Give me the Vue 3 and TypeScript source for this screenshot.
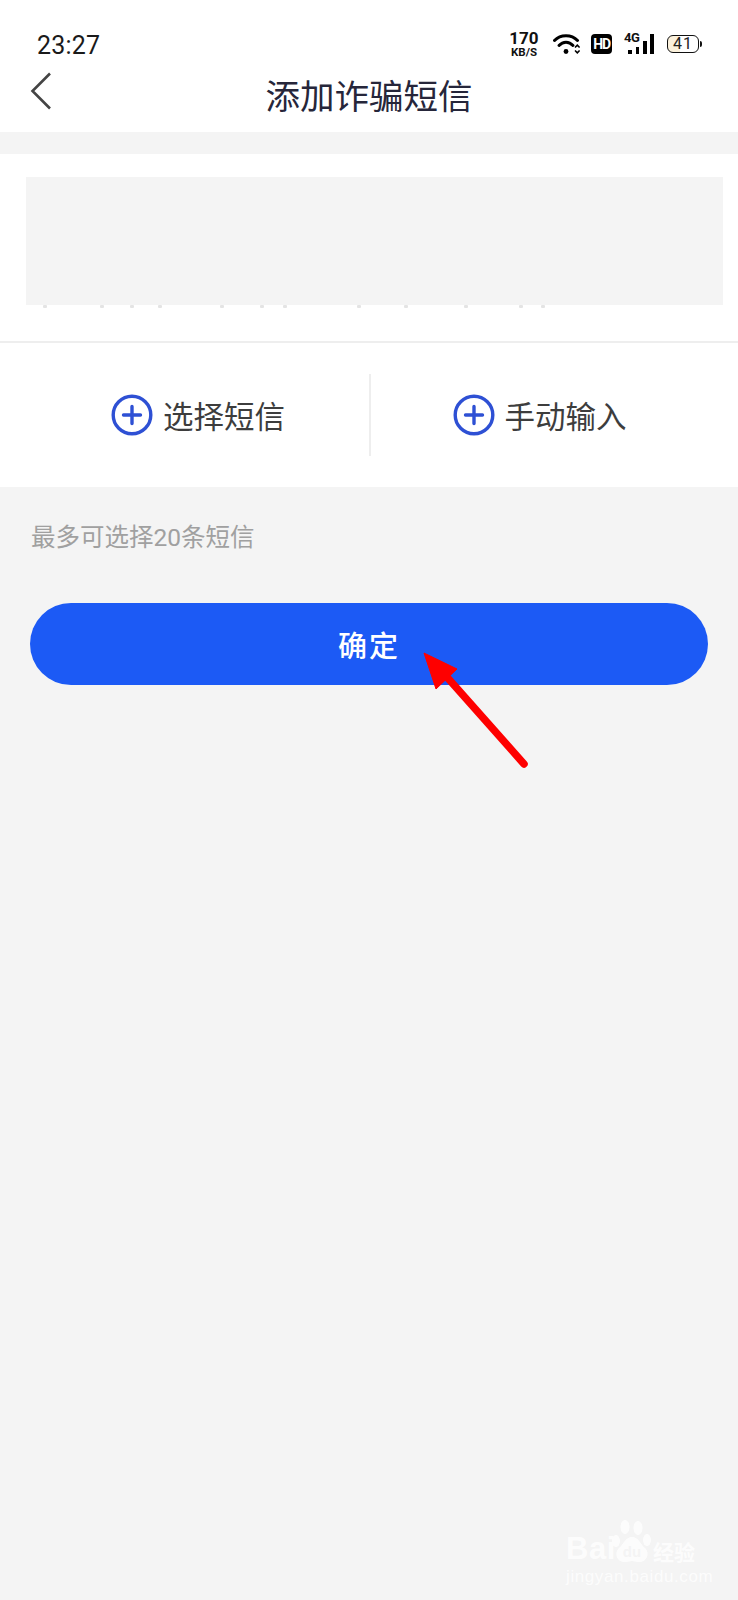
<script setup lang="ts">
const actions: string[] = ['选择短信', '手动输入']
const specks: number[] = [43, 100, 130, 158, 220, 260, 283, 357, 404, 464, 519, 541]
</script>

<template>
  <div class="page">
    <header class="head">
      <div class="status">
        <span class="time">23:27</span>
        <div class="status-icons">
          <div class="speed"><b>170</b><small>KB/S</small></div>
          <svg class="wifi" width="28" height="22" viewBox="0 0 28 22" fill="none" stroke="#000" stroke-linecap="round">
            <path d="M1.500 7.500C7.500 1 18.500 1 24.500 7.500" stroke-width="3" />
            <path d="M6 12.500C10 8 16 8 20 12.500" stroke-width="3" />
            <circle cx="13" cy="18.500" r="2.400" fill="#000" stroke="none" />
            <path d="M22.500 14l1.800 -1.800 1.800 1.800M22.500 18l1.800 1.800 1.800 -1.800" stroke-width="1.700" />
          </svg>
          <span class="hd">HD</span>
          <div class="signal">
            <span class="g4">4G</span>
            <i class="bar b1"></i><i class="bar b2"></i><i class="bar b3"></i><i class="bar b4"></i>
          </div>
          <div class="battery"><span class="level">41</span><i class="cap"></i></div>
        </div>
      </div>
      <div class="nav">
        <svg class="back" width="22" height="38" viewBox="0 0 22 38" fill="none" stroke="#444" stroke-width="2.600">
          <path d="M20 1.500L2.500 19 20 36.500" />
        </svg>
        <h1 class="title">添加诈骗短信</h1>
        <span></span>
      </div>
    </header>

    <section class="card">
      <div class="message">
        <div class="mask"></div>
        <svg class="specks" width="560" height="6" viewBox="0 0 560 6">
          <rect v-for="x in specks" :key="x" :x="x - 36" y="0" width="4" height="3" rx="1" fill="#e4e4e4" />
        </svg>
      </div>
      <div class="actions">
        <button v-for="(a, i) in actions" :key="a" class="action" :class="i === 0 ? 'first' : 'second'">
          <svg width="42" height="42" viewBox="0 0 42 42" fill="none" stroke="#2e50d4">
            <circle cx="21" cy="21" r="18.800" stroke-width="3.400" />
            <path d="M21 12.500v17M12.500 21h17" stroke-width="3.400" stroke-linecap="round" />
          </svg>
          <span>{{ a }}</span>
        </button>
      </div>
    </section>

    <p class="hint">最多可选择20条短信</p>
    <button class="confirm">确定</button>

    <svg class="arrow" width="120" height="130" viewBox="0 0 120 130">
      <path d="M2 2L35 18 14 38Z" fill="#fe0000" stroke="#fe0000" stroke-width="1" stroke-linejoin="round" />
      <path d="M24 25L102 113" stroke="#fe0000" stroke-width="7.500" stroke-linecap="round" />
    </svg>

    <div class="mark">
      <div class="mark-row">
        <span class="bai">Bai</span>
        <svg class="paw" width="42" height="46" viewBox="0 0 42 46" fill="#fff">
          <ellipse cx="5" cy="21" rx="4" ry="6" />
          <ellipse cx="14" cy="7" rx="4.500" ry="7" />
          <ellipse cx="27" cy="8" rx="4.500" ry="7" />
          <ellipse cx="36" cy="20" rx="4" ry="6" />
          <path d="M21 17c7 0 8 7 13 11 6 6 1 15-7 14-3 0-4-1-6-1s-3 1-6 1c-8 1-13-8-7-14 5-4 6-11 13-11z" />
          <text x="21" y="37" text-anchor="middle" class="du">du</text>
        </svg>
        <span class="jy">经验</span>
      </div>
      <div class="url">jingyan.baidu.com</div>
    </div>
  </div>
</template>

<style>
html, body { margin: 0; background: #f4f4f4; }
</style>

<style scoped>
.page {
  position: relative;
  width: 738px;
  height: 1600px;
  overflow: hidden;
  background: #f4f4f4;
  font-family: Roboto, "Noto Sans CJK SC", sans-serif;
}
.head { height: 132px; background: #fff; }
.status {
  height: 64px;
  box-sizing: border-box;
  padding: 31px 37px 0;
  display: flex;
  justify-content: space-between;
  align-items: flex-start;
}
.time {
  font: 400 25px/30px Roboto, sans-serif;
  color: #1a1a1a;
  letter-spacing: 0.2px;
}
.status-icons {
  display: flex;
  align-items: center;
  height: 30px;
  margin: -2px 2px 0 0;
}
.speed {
  display: flex;
  flex-direction: column;
  align-items: center;
  width: 30px;
  font-family: Roboto, sans-serif;
  color: #111;
}
.speed b { font-size: 17px; line-height: 15px; font-weight: 700; }
.speed small { font-size: 11.500px; line-height: 12px; font-weight: 700; }
.wifi { margin-left: 14px; }
.hd {
  margin-left: 10px;
  width: 21px;
  height: 20px;
  border-radius: 4px;
  background: #000;
  color: #fff;
  font: 700 14px/20px Roboto, sans-serif;
  text-align: center;
  letter-spacing: -1.200px;
}
.signal {
  position: relative;
  margin-left: 12px;
  width: 30px;
  height: 22px;
}
.g4 {
  position: absolute;
  left: 0;
  top: -1px;
  font: 700 13px/12px Roboto, sans-serif;
  color: #111;
  letter-spacing: -0.5px;
}
.bar { position: absolute; bottom: 1px; width: 3.500px; background: #000; }
.b1 { left: 4px; height: 4px; }
.b2 { left: 11.500px; height: 7px; }
.b3 { left: 19px; height: 13px; }
.b4 { left: 26px; height: 20px; }
.battery {
  position: relative;
  margin-left: 13px;
  width: 30px;
  height: 16px;
  border: 1.500px solid #111;
  border-radius: 6px;
  background: linear-gradient(90deg, #fbf1dc 0 41%, #fff 41%);
  text-align: center;
}
.level { font: 400 16px/16px Roboto, sans-serif; color: #222; display: block; letter-spacing: 1px; }
.cap {
  position: absolute;
  right: -4px;
  top: 5px;
  width: 2px;
  height: 6px;
  background: #111;
  border-radius: 0 2px 2px 0;
}
.nav {
  height: 68px;
  display: grid;
  grid-template-columns: 1fr auto 1fr;
  padding-left: 30px;
  padding-right: 30px;
}
.back { margin-top: 8px; }
.title {
  margin: 0;
  padding-top: 2px;
  font-size: 34.500px;
  line-height: 62px;
  font-weight: 400;
  color: #26263a;
}
.card { margin-top: 22px; height: 333px; background: #fff; }
.message {
  height: 189px;
  box-sizing: border-box;
  padding: 23px 15px 0 26px;
  border-bottom: 2px solid #eeeeee;
}
.mask { height: 128px; background: #f4f4f4; }
.specks { display: block; margin-left: 10px; }
.actions { display: grid; grid-template-columns: 1fr 1fr; height: 144px; }
.action {
  display: flex;
  align-items: center;
  justify-content: center;
  gap: 10px;
  margin: 31px 0;
  border: 0;
  background: none;
  font: inherit;
  font-size: 30.500px;
  color: #3d3d3d;
}
.first { padding: 0 0 0 27px; }
.second { padding: 0 30px 0 0; border-left: 2px solid #eeeeee; }
.hint {
  margin: 35px 0 0 31px;
  font-size: 24.500px;
  line-height: 32px;
  color: #a0a0a0;
}
.confirm {
  display: block;
  margin: 49px 0 0 30px;
  width: 678px;
  height: 82px;
  border: 0;
  border-radius: 41px;
  background: #1c5af5;
  color: #fff;
  font: inherit;
  font-family: "Noto Sans CJK SC", sans-serif;
  font-size: 29px;
  font-weight: 500;
  letter-spacing: 2px;
}
.arrow { position: absolute; left: 422px; top: 651px; }
.mark {
  position: absolute;
  left: 566px;
  top: 1520px;
  width: 140px;
  color: #fff;
  opacity: 0.8;
}
.mark-row { display: flex; align-items: flex-end; height: 46px; }
.bai { font: 700 31px/30px "Liberation Sans", sans-serif; width: 46px; letter-spacing: 0.5px; padding-bottom: 2px; }
.paw { margin-left: -1px; }
.du { font: 700 15px "Liberation Sans", sans-serif; fill: #f4f4f4; }
.jy { font-family: "Noto Sans CJK SC", sans-serif; font-size: 21px; line-height: 26px; font-weight: 700; padding-bottom: 2px; white-space: nowrap; }
.url { font: 400 17px/20px "Liberation Sans", sans-serif; margin-top: 1px; letter-spacing: 0.6px; }
</style>
